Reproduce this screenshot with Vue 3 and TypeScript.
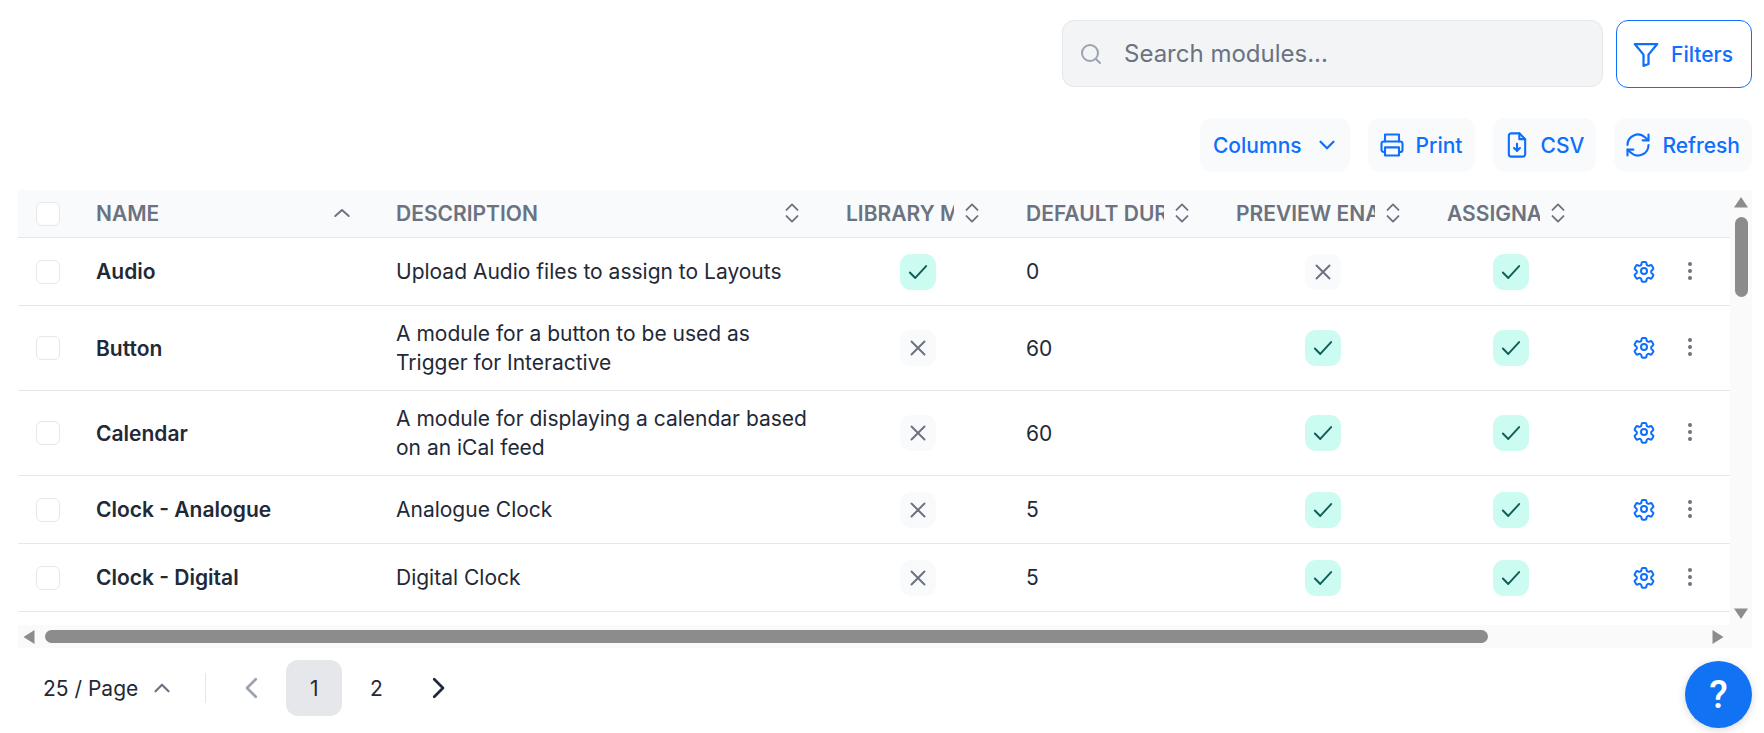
<script setup lang="ts">
interface ModuleRow {
  name: string;
  description: string;
  library: boolean;
  duration: number;
  preview: boolean;
  assignable: boolean;
}

const rows: ModuleRow[] = [
  { name: 'Audio', description: 'Upload Audio files to assign to Layouts', library: true, duration: 0, preview: false, assignable: true },
  { name: 'Button', description: 'A module for a button to be used as Trigger for Interactive', library: false, duration: 60, preview: true, assignable: true },
  { name: 'Calendar', description: 'A module for displaying a calendar based on an iCal feed', library: false, duration: 60, preview: true, assignable: true },
  { name: 'Clock - Analogue', description: 'Analogue Clock', library: false, duration: 5, preview: true, assignable: true },
  { name: 'Clock - Digital', description: 'Digital Clock', library: false, duration: 5, preview: true, assignable: true },
];

const sortCols = ['DESCRIPTION', 'LIBRARY MEDIA', 'DEFAULT DURATION', 'PREVIEW ENABLED', 'ASSIGNABLE'];
</script>

<template>
  <div class="page">
    <div class="search-row">
      <label class="search">
        <svg class="search-icon" viewBox="0 0 24 24" fill="none" stroke="currentColor" stroke-width="2" stroke-linecap="round" stroke-linejoin="round">
          <circle cx="11" cy="11" r="8" /><path d="m21 21-4.3-4.3" />
        </svg>
        <input type="text" placeholder="Search modules..." />
      </label>
      <button class="filters">
        <svg class="ic" viewBox="0 0 24 24" fill="none" stroke="currentColor" stroke-width="1.8" stroke-linecap="round" stroke-linejoin="round">
          <path d="M3 4h18l-7 8.5V20l-4 1.5v-9z" />
        </svg>
        Filters
      </button>
    </div>

    <div class="tools">
      <button class="tool columns">
        Columns
        <svg class="ic-s" viewBox="0 0 24 24" fill="none" stroke="currentColor" stroke-width="2" stroke-linecap="round" stroke-linejoin="round"><path d="m6 9 6 6 6-6" /></svg>
      </button>
      <button class="tool">
        <svg class="ic" viewBox="0 0 24 24" fill="none" stroke="currentColor" stroke-width="1.8" stroke-linecap="round" stroke-linejoin="round">
          <path d="M6 9V3h12v6" /><path d="M6 18H5a2 2 0 0 1-2-2v-5a2 2 0 0 1 2-2h14a2 2 0 0 1 2 2v5a2 2 0 0 1-2 2h-1" /><path d="M6 14h12v7H6z" />
        </svg>
        Print
      </button>
      <button class="tool">
        <svg class="ic" viewBox="0 0 24 24" fill="none" stroke="currentColor" stroke-width="1.8" stroke-linecap="round" stroke-linejoin="round">
          <path d="M14 2H7a2 2 0 0 0-2 2v16a2 2 0 0 0 2 2h10a2 2 0 0 0 2-2V7z" /><path d="M14 2v5h5" /><path d="M12 11v6" /><path d="m9.500 14.500 2.500 2.500 2.500-2.500" />
        </svg>
        CSV
      </button>
      <button class="tool">
        <svg class="ic" viewBox="0 0 24 24" fill="none" stroke="currentColor" stroke-width="1.8" stroke-linecap="round" stroke-linejoin="round">
          <path d="M3 12a9 9 0 0 1 15-6.700L21 8" /><path d="M21 3v5h-5" /><path d="M21 12a9 9 0 0 1-15 6.700L3 16" /><path d="M8 16H3v5" />
        </svg>
        Refresh
      </button>
    </div>

    <div class="grid-wrap">
      <div class="table-area">
        <table>
          <colgroup>
            <col class="c-check" /><col class="c-name" /><col class="c-desc" /><col class="c-lib" />
            <col class="c-dur" /><col class="c-prev" /><col class="c-assign" /><col class="c-act" />
          </colgroup>
          <thead>
            <tr>
              <th><span class="check"></span></th>
              <th class="th-name">
                <div class="th-in">
                  <span class="th-label">NAME</span>
                  <svg class="sort" viewBox="0 0 18 18" fill="none" stroke="currentColor" stroke-width="1.6" stroke-linecap="round" stroke-linejoin="round"><path d="m3.500 11.500 5.500-5 5.500 5" /></svg>
                </div>
              </th>
              <th v-for="c in sortCols" :key="c">
                <div class="th-in">
                  <span class="th-label">{{ c }}</span>
                  <svg class="sort" viewBox="0 0 18 18" fill="none" stroke="currentColor" stroke-width="1.500" stroke-linecap="round" stroke-linejoin="round"><path d="m4.500 6.500 4.500-4.500 4.500 4.500" /><path d="m4.500 11.500 4.500 4.500 4.500-4.500" /></svg>
                </div>
              </th>
              <th></th>
            </tr>
          </thead>
          <tbody>
            <tr v-for="r in rows" :key="r.name">
              <td><span class="check"></span></td>
              <td class="name">{{ r.name }}</td>
              <td class="desc">{{ r.description }}</td>
              <td v-for="(flag, i) in [r.library, null, r.preview, r.assignable]" :key="i" :class="{ mid: flag !== null }">
                <template v-if="flag === null">{{ r.duration }}</template>
                <span v-else-if="flag" class="badge yes">
                  <svg viewBox="0 0 24 24" fill="none" stroke="currentColor" stroke-width="1.800" stroke-linecap="round" stroke-linejoin="round"><path d="m4.500 12.500 5 5 10-11" /></svg>
                </span>
                <span v-else class="badge no">
                  <svg viewBox="0 0 24 24" fill="none" stroke="currentColor" stroke-width="1.800" stroke-linecap="round" stroke-linejoin="round"><path d="m6 6 12 12M18 6 6 18" /></svg>
                </span>
              </td>
              <td>
                <div class="acts">
                  <svg class="gear" viewBox="0 0 24 24" fill="none" stroke="currentColor" stroke-width="2" stroke-linecap="round" stroke-linejoin="round">
                    <path d="M9.600 3.900c.1-.5.6-.9 1.100-.9h2.600c.5 0 1 .4 1.100.9l.2 1.600c.1.400.3.700.7.900l.6.3c.3.200.7.200 1.100.1l1.500-.6c.5-.2 1.100 0 1.400.5l1.300 2.300c.3.500.2 1.100-.3 1.400l-1.200 1c-.3.300-.5.700-.5 1.100v.7c0 .4.200.8.500 1.100l1.200 1c.5.300.6.900.3 1.400l-1.300 2.300c-.3.500-.9.700-1.400.5l-1.500-.6c-.4-.1-.8-.1-1.100.1l-.6.3c-.4.200-.6.500-.7.900l-.2 1.600c-.1.500-.6.900-1.100.9h-2.600c-.5 0-1-.4-1.100-.9l-.2-1.600c-.1-.4-.3-.7-.7-.9l-.6-.3c-.3-.2-.7-.2-1.100-.1l-1.500.6c-.5.200-1.100 0-1.400-.5l-1.300-2.300c-.3-.5-.2-1.100.3-1.400l1.200-1c.3-.3.5-.7.5-1.100v-.7c0-.4-.2-.8-.5-1.100l-1.200-1c-.5-.3-.6-.9-.3-1.400l1.300-2.300c.3-.5.9-.7 1.400-.5l1.500.6c.4.100.8.100 1.100-.1l.6-.3c.4-.2.600-.5.700-.9z" />
                    <circle cx="12" cy="12" r="3" />
                  </svg>
                  <svg class="dots" viewBox="0 0 24 24" fill="currentColor"><circle cx="12" cy="5" r="2" /><circle cx="12" cy="12" r="2" /><circle cx="12" cy="19" r="2" /></svg>
                </div>
              </td>
            </tr>
          </tbody>
        </table>
      </div>
      <div class="vbar">
        <svg class="arrow" viewBox="0 0 16 16"><path d="M8 3 15 13.500H1z" /></svg>
        <div class="vthumb"></div>
        <svg class="arrow vdown" viewBox="0 0 16 16"><path d="M8 13 15 2.500H1z" /></svg>
      </div>
      <div class="hbar">
        <svg class="arrow" viewBox="0 0 16 16"><path d="M2.500 8 13.500 1v14z" /></svg>
        <div class="hthumb"></div>
        <svg class="arrow" viewBox="0 0 16 16"><path d="M13.500 8 2.500 1v14z" /></svg>
      </div>
    </div>

    <div class="pager">
      <button class="per-page">
        25 / Page
        <svg class="ic-s muted" viewBox="0 0 24 24" fill="none" stroke="currentColor" stroke-width="2" stroke-linecap="round" stroke-linejoin="round"><path d="m6 15 6-6 6 6" /></svg>
      </button>
      <span class="divider"></span>
      <button class="pg prev"><svg viewBox="0 0 24 24" fill="none" stroke="currentColor" stroke-width="2.200" stroke-linecap="round" stroke-linejoin="round"><path d="m15 5-7 7 7 7" /></svg></button>
      <button class="pg on">1</button>
      <button class="pg">2</button>
      <button class="pg"><svg viewBox="0 0 24 24" fill="none" stroke="currentColor" stroke-width="2.200" stroke-linecap="round" stroke-linejoin="round"><path d="m9 5 7 7-7 7" /></svg></button>
    </div>

    <button class="help">?</button>
  </div>
</template>

<style scoped>
.page {
  position: relative;
  height: 733px;
  overflow: hidden;
  background: #fff;
  font-family: Inter, "Liberation Sans", sans-serif;
  font-size: 21px;
  color: #1f2937;
}
button {
  font: inherit;
  border: 0;
  background: none;
  cursor: pointer;
}
.search-row {
  display: flex;
  justify-content: flex-end;
  gap: 13px;
  padding: 20px 12px 0 0;
}
.search {
  display: flex;
  align-items: center;
  gap: 19px;
  width: 541px;
  height: 67px;
  box-sizing: border-box;
  padding: 0 16px;
  background: #f3f4f6;
  border: 1px solid #e5e7eb;
  border-radius: 12px;
}
.search-icon {
  width: 24px;
  height: 24px;
  color: #9ca3af;
  flex: none;
}
.search input {
  flex: 1;
  min-width: 0;
  border: 0;
  outline: 0;
  background: none;
  font: inherit;
  font-size: 24px;
  color: #1f2937;
}
.search input::placeholder {
  color: #6b7280;
  opacity: 1;
}
.filters {
  display: flex;
  align-items: center;
  gap: 10px;
  width: 136px;
  height: 68px;
  box-sizing: border-box;
  padding: 0 0 0 14px;
  border: 1.5px solid #0e6ffd;
  border-radius: 12px;
  color: #0e6ffd;
  font-weight: 500;
}
.filters .ic {
  width: 30px;
  height: 30px;
}
.ic {
  width: 28px;
  height: 28px;
  flex: none;
}
.ic-s {
  width: 26px;
  height: 26px;
  flex: none;
}
.muted {
  color: #6b7280;
}
.tools {
  display: flex;
  justify-content: flex-end;
  gap: 18px;
  padding: 30px 12px 0 0;
}
.tool {
  display: flex;
  align-items: center;
  gap: 10px;
  height: 54px;
  padding: 0 12px 0 10px;
  background: #f9fafb;
  border-radius: 12px;
  color: #0e6ffd;
  font-weight: 500;
}
.columns {
  gap: 12px;
  padding: 0 10px 0 13px;
}
.grid-wrap {
  display: grid;
  grid-template-columns: 1712px 22px;
  grid-template-rows: 435px 23px;
  margin: 18px 12px 0 18px;
}
.table-area {
  overflow: hidden;
}
table {
  width: 1712px;
  table-layout: fixed;
  border-collapse: collapse;
}
.c-check { width: 63px; }
.c-name { width: 299px; }
.c-desc { width: 450px; }
.c-lib { width: 180px; }
.c-dur { width: 210px; }
.c-prev { width: 211px; }
.c-assign { width: 165px; }
.c-act { width: 134px; }
th {
  height: 46px;
  padding: 0 27px 1px 16px;
  background: #f9fafb;
  border-bottom: 1px solid #e5e7eb;
  color: #6b7280;
  font-size: 21px;
  font-weight: 600;
  text-align: left;
}
th:first-child,
td:first-child {
  padding: 0 0 0 18px;
}
.th-name {
  padding-left: 15px;
}
.th-in {
  display: flex;
  align-items: center;
  gap: 7px;
}
.th-label {
  flex: 1;
  min-width: 0;
  overflow: hidden;
  white-space: nowrap;
}
.sort {
  width: 22px;
  height: 22px;
  flex: none;
}
td {
  height: 68px;
  box-sizing: border-box;
  padding: 13px 28px 13px 16px;
  border-bottom: 1px solid #e5e7eb;
  line-height: 29px;
  vertical-align: middle;
}
.name {
  padding-left: 15px;
  font-weight: 600;
}
.desc {
  padding-right: 20px;
}
.mid {
  padding-right: 20px;
}
.mid:nth-child(n + 6) {
  padding-right: 22px;
}
.check {
  display: block;
  width: 24px;
  height: 24px;
  box-sizing: border-box;
  background: #fff;
  border: 1px solid #e5e7eb;
  border-radius: 6px;
}
.badge {
  display: flex;
  align-items: center;
  justify-content: center;
  width: 36px;
  height: 36px;
  margin: 0 auto;
  border-radius: 11px;
}
.badge svg {
  width: 26px;
  height: 26px;
}
.yes {
  background: #ccfbf1;
  color: #115e59;
}
.no {
  background: #f9fafb;
  color: #6b7280;
}
.acts {
  display: flex;
  align-items: center;
  gap: 22px;
  padding: 0 0 2px 20px;
}
.gear {
  width: 24px;
  height: 24px;
  color: #0e6ffd;
}
.dots {
  width: 24px;
  height: 24px;
  color: #6b7280;
}
.vbar {
  display: flex;
  flex-direction: column;
  align-items: center;
  padding-top: 4px;
  background: #fafafa;
}
.arrow {
  width: 16px;
  height: 16px;
  flex: none;
  fill: #8c8c8c;
}
.vthumb {
  width: 13px;
  height: 80px;
  margin-top: 7px;
  background: #8c8c8c;
  border-radius: 7px;
}
.vdown {
  margin-top: auto;
  margin-bottom: 3px;
}
.hbar {
  grid-column: 1 / span 2;
  display: flex;
  align-items: center;
  padding: 0 26px 0 3px;
  background: #fafafa;
}
.hthumb {
  width: 1443px;
  height: 13px;
  margin-left: 8px;
  margin-right: auto;
  background: #8c8c8c;
  border-radius: 7px;
}
.pager {
  display: flex;
  align-items: center;
  gap: 6px;
  padding: 12px 0 0 43px;
}
.per-page {
  display: flex;
  align-items: center;
  gap: 11px;
  padding: 0;
  color: #1f2937;
}
.divider {
  width: 1px;
  height: 30px;
  margin: 0 12px 0 24px;
  background: #e5e7eb;
}
.pg {
  display: flex;
  align-items: center;
  justify-content: center;
  width: 56px;
  height: 56px;
  border-radius: 12px;
  padding: 0;
  color: #1f2937;
}
.pg svg {
  width: 30px;
  height: 30px;
}
.prev {
  color: #9ca3af;
}
.on {
  background: #e5e7eb;
}
.help {
  position: absolute;
  right: 12px;
  bottom: 5px;
  width: 67px;
  height: 67px;
  border-radius: 50%;
  padding: 0;
  background: #1173f4;
  color: #fff;
  font-family: Roboto, sans-serif;
  font-size: 38px;
  font-weight: 500;
  box-shadow: 0 2px 8px rgba(0, 0, 0, 0.15);
}
</style>
